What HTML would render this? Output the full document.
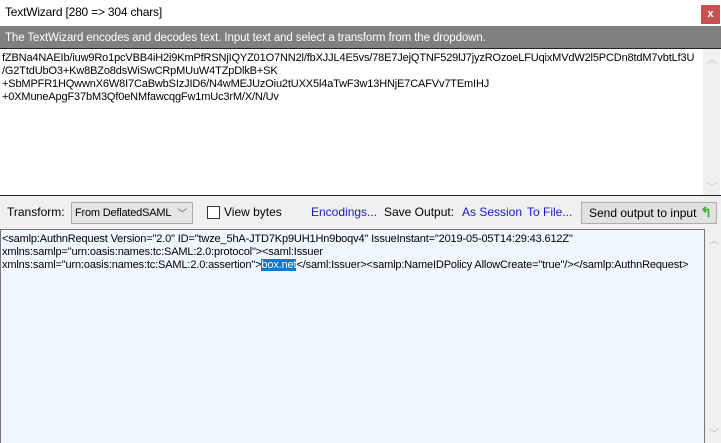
<!DOCTYPE html>
<html><head><style>
*{margin:0;padding:0;box-sizing:border-box}
body{width:721px;height:443px;overflow:hidden;background:#f0f0f0;font-family:"Liberation Sans",sans-serif;font-size:12px;position:relative}
.abs{position:absolute}
#title{left:0;top:0;width:721px;height:26px;background:#fff}
#title span{position:absolute;left:5px;top:5px;font-size:12px;color:#000;letter-spacing:-0.2px}
#close{left:701px;top:5px;width:19px;height:19px;background:#c75050;color:#fff;font-weight:bold;font-size:11px;text-align:center;line-height:18px}
#bar{left:0;top:26px;width:721px;height:22px;background:#808080;color:#fff;font-size:11.5px;padding:6px 0 0 5px;letter-spacing:-0.1px}
#inp{left:0;top:48px;width:721px;height:148px;background:#fff;border-top:1px solid #222;border-bottom:1px solid #222}
.txt{font-size:11px;letter-spacing:-0.15px;line-height:13px;color:#000;white-space:pre}
#sb1{left:703px;top:49px;width:17px;height:146px;background:#f0f0f0}
.arr{position:absolute;left:4px;color:#bbb;font-size:10px}
#out{left:0;top:229px;width:705px;height:214px;background:#f0f7ff;border:1px solid #777;border-bottom:none}
#sb2{left:705px;top:229px;width:16px;height:214px;background:#f0f0f0}
.lnk{color:#1a1acd}
</style></head><body>
<div id="title" class="abs"><span>TextWizard [280 =&gt; 304 chars]</span></div>
<div id="close" class="abs">x</div>
<div id="bar" class="abs">The TextWizard encodes and decodes text. Input text and select a transform from the dropdown.</div>
<div id="inp" class="abs"><div class="txt" style="padding:3px 0 0 2px">fZBNa4NAEIb/iuw9Ro1pcVBB4iH2i9KmPfRSNjIQYZ01O7NN2l/fbXJJL4E5vs/78E7JejQTNF529lJ7jyzROzoeLFUqixMVdW2l5PCDn8tdM7vbtLf3U
/G2TtdUbO3+Kw8BZo8dsWiSwCRpMUuW4TZpDlkB+SK
+SbMPFR1HQwwnX6W8I7CaBwbSIzJID6/N4wMEJUzOiu2tUXX5l4aTwF3w13HNjE7CAFVv7TEmIHJ
+0XMuneApgF37bM3Qf0eNMfawcqgFw1mUc3rM/X/N/Uv</div></div>
<div id="sb1" class="abs"><span class="arr" style="top:2px">︿</span><span class="arr" style="top:130px">﹀</span></div>
<div class="abs" style="left:7px;top:205px">Transform:</div>
<div class="abs" style="left:71px;top:202px;width:122px;height:22px;background:#e5e5e5;border:1px solid #acacac;padding:4px 0 0 3px;font-size:11px;letter-spacing:-0.2px">From DeflatedSAML<span style="position:absolute;right:5px;top:2px;color:#555;font-size:10px">﹀</span></div>
<div class="abs" style="left:207px;top:206px;width:13px;height:13px;background:#fff;border:1px solid #333"></div>
<div class="abs" style="left:224px;top:205px">View bytes</div>
<div class="abs lnk" style="left:311px;top:205px">Encodings...</div>
<div class="abs" style="left:384px;top:205px">Save Output:</div>
<div class="abs lnk" style="left:462px;top:205px">As Session</div>
<div class="abs lnk" style="left:527px;top:205px">To File...</div>
<div class="abs" style="left:581px;top:202px;width:136px;height:22px;background:#e1e1e1;border:1px solid #adadad;padding:3px 0 0 7px">Send output to input <span style="color:#3cb034;font-weight:bold;font-size:14px;position:absolute;right:4px;top:1px">↰</span></div>
<div id="out" class="abs"><div class="txt" style="padding:3px 0 0 1px;line-height:13px">&lt;samlp:AuthnRequest Version="2.0" ID="twze_5hA-JTD7Kp9UH1Hn9boqv4" IssueInstant="2019-05-05T14:29:43.612Z"
xmlns:samlp="urn:oasis:names:tc:SAML:2.0:protocol"&gt;&lt;saml:Issuer
xmlns:saml="urn:oasis:names:tc:SAML:2.0:assertion"&gt;<span style="background:#0078d7;color:#fff">box.net</span>&lt;/saml:Issuer&gt;&lt;samlp:NameIDPolicy AllowCreate="true"/&gt;&lt;/samlp:AuthnRequest&gt;</div></div>
<div id="sb2" class="abs"><span class="arr" style="top:3px">︿</span><span class="arr" style="top:196px">﹀</span></div>
</body></html>
